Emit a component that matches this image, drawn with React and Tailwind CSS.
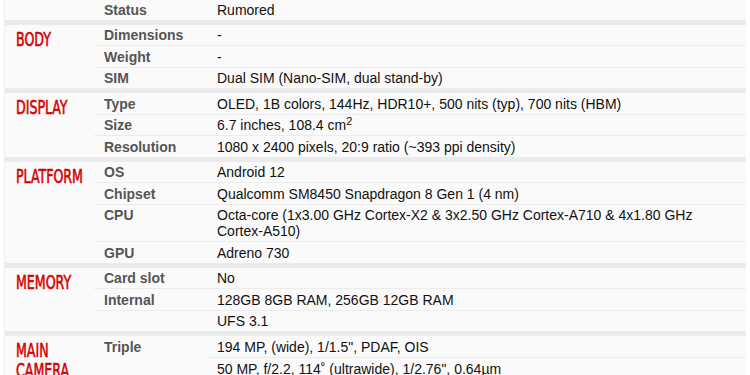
const headFont = {
  fontFamily: '"Liberation Sans Narrow", "DejaVu Sans Condensed", "Liberation Sans", sans-serif',
};

const sections = [
  {
    title: [],
    rows: [{ label: "Status", value: "Rumored" }],
  },
  {
    title: ["BODY"],
    rows: [
      { label: "Dimensions", value: "-" },
      { label: "Weight", value: "-" },
      { label: "SIM", value: "Dual SIM (Nano-SIM, dual stand-by)" },
    ],
  },
  {
    title: ["DISPLAY"],
    rows: [
      { label: "Type", value: "OLED, 1B colors, 144Hz, HDR10+, 500 nits (typ), 700 nits (HBM)" },
      {
        label: "Size",
        value: (
          <>
            6.7 inches, 108.4 cm<sup className="text-[11px]">2</sup>
          </>
        ),
      },
      { label: "Resolution", value: "1080 x 2400 pixels, 20:9 ratio (~393 ppi density)" },
    ],
  },
  {
    title: ["PLATFORM"],
    rows: [
      { label: "OS", value: "Android 12" },
      { label: "Chipset", value: "Qualcomm SM8450 Snapdragon 8 Gen 1 (4 nm)" },
      {
        label: "CPU",
        value: "Octa-core (1x3.00 GHz Cortex-X2 & 3x2.50 GHz Cortex-A710 & 4x1.80 GHz Cortex-A510)",
      },
      { label: "GPU", value: "Adreno 730" },
    ],
  },
  {
    title: ["MEMORY"],
    rows: [
      { label: "Card slot", value: "No" },
      { label: "Internal", value: "128GB 8GB RAM, 256GB 12GB RAM" },
      { label: "", value: "UFS 3.1" },
    ],
  },
];

function Heading({ lines }) {
  return (
    <div className="w-[89px] shrink-0 pl-[11px] pt-[4px]">
      <div
        className="origin-left scale-x-[0.7] text-[20px] leading-[20px] text-[#d50000] whitespace-nowrap [-webkit-text-stroke:0.6px_#d50000]"
        style={headFont}
      >
        {lines.map((t) => (
          <div key={t}>{t}</div>
        ))}
      </div>
    </div>
  );
}

function Row({ label, value, last }) {
  return (
    <div className={`flex ${last ? "" : "border-b border-[#ececec]"}`}>
      <div className="w-[113px] shrink-0 pl-[10px] pt-[2.5px] pb-[2px] font-bold text-[#555]">
        {label}
      </div>
      <div className="flex-1 pl-[10px] pr-[10px] pt-[2.5px] pb-[2px] text-[#111]">{value}</div>
    </div>
  );
}

function Section({ title, rows }) {
  return (
    <div className="flex border-b-[5px] border-[#ebebeb]">
      <Heading lines={title} />
      <div className="flex-1">
        {rows.map((r, i) => (
          <Row key={i} label={r.label} value={r.value} last={i === rows.length - 1} />
        ))}
      </div>
    </div>
  );
}

export default function App() {
  return (
    <div
      className="w-[750px] h-[375px] overflow-hidden bg-white px-[4px] text-[14px] leading-[16px]"
      style={{ fontFamily: '"Liberation Sans", Arial, sans-serif' }}
    >
      <div className="w-[742px] -mt-[1px] bg-[#fafafa] border-l border-[#eeeeee]">
        {sections.map((s, i) => (
          <Section key={i} title={s.title} rows={s.rows} />
        ))}
        {/* Main camera */}
        <div className="flex">
          <Heading lines={["MAIN", "CAMERA"]} />
          <div className="flex-1 flex">
            <div className="w-[113px] shrink-0 pl-[10px] pt-[3px] font-bold text-[#555]">Triple</div>
            <div className="flex-1 text-[#111]">
              <div className="pl-[10px] pt-[3px] pb-[2px]">194 MP, (wide), 1/1.5", PDAF, OIS</div>
              <div className="pl-[10px] pt-[2.5px] pb-[2px] border-t border-[#ececec]">
                50 MP, f/2.2, 114˚ (ultrawide), 1/2.76", 0.64µm
              </div>
              <div className="pl-[10px] pt-[2.5px] pb-[2px] border-t border-[#ececec]">
                50 MP, f/2.0, (telephoto), 2x optical zoom
              </div>
            </div>
          </div>
        </div>
      </div>
    </div>
  );
}
